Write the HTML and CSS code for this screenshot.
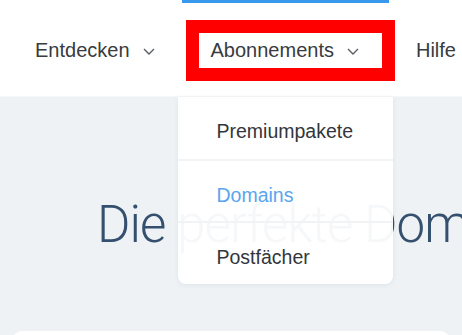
FILE: index.html
```html
<!DOCTYPE html>
<html>
<head>
    <title>Domains</title>
    <link rel="stylesheet" href="styles.css">
</head>
<body>
<header class="header">
    <nav class="nav">
        <a class="nav-item" href="#">Entdecken
            <svg class="chevron" viewBox="0 0 12 7"><path d="M1 1l5 5 5-5"/></svg>
        </a>
        <div class="nav-item nav-item-active">
            <a class="nav-link" href="#">Abonnements
                <svg class="chevron" viewBox="0 0 12 7"><path d="M1 1l5 5 5-5"/></svg>
            </a>
            <ul class="dropdown">
                <li><a href="#">Premiumpakete</a></li>
                <li><a class="current" href="#">Domains</a></li>
                <li><a href="#">Postfächer</a></li>
            </ul>
        </div>
        <a class="nav-item" href="#">Hilfe</a>
    </nav>
</header>
<main class="main">
    <h1 class="title">Die perfekte Domain für Ihre Website</h1>
    <div class="card"></div>
</main>
</body>
</html>
```

FILE: styles.css
```css
* {
	box-sizing: border-box;
}

html,
body {
	height: 100%;
}

body {
	margin: 0;
	overflow: hidden;
	background-color: #eef2f5;
	font-family: "Liberation Sans", Arial, sans-serif;
}

a {
	color: inherit;
	text-decoration: none;
}

.header {
	position: relative;
	z-index: 2;
	height: 97px;
	background-color: #fff;
	border-bottom: 1px solid #f5f7f9;
}

.nav {
	display: flex;
	align-items: center;
	gap: 57px;
	height: 100%;
	padding-top: 4px;
	padding-left: 35px;
	white-space: nowrap;
	color: #383b40;
	font-size: 20px;
}

.nav-item,
.nav-link {
	display: flex;
	align-items: center;
	gap: 13px;
}

.nav-item:first-child {
	margin-right: -1px;
}

.chevron {
	width: 12px;
	height: 7px;
	margin-top: 2px;
	fill: none;
	stroke: #5a5e63;
	stroke-width: 1.4;
}

.nav-item-active {
	position: relative;
}

/* selected marker on top of the header */
.nav-item-active::before {
	content: "";
	position: absolute;
	top: -33px;
	left: -29px;
	width: 207px;
	height: 3px;
	background-color: #3899ec;
}

/* highlight box */
.nav-link {
	outline: 13px solid #ff0000;
	padding: 0 23px 0 12px;
	margin: 0 -23px 0 -12px;
	height: 35px;
}

.dropdown {
	position: absolute;
	top: 64px;
	left: -33px;
	width: 215px;
	list-style: none;
	margin: 0;
	padding: 0;
	background-color: rgba(255, 255, 255, 0.955);
	border-radius: 0 0 8px 8px;
	box-shadow: 0 1px 5px rgba(40, 60, 90, 0.08);
	font-size: 19.5px;
	color: #33363a;
}

.dropdown li {
	height: 62px;
	padding: 24px 39px 0;
	line-height: 20px;
	border-top: 2px solid #f2f3f5;
}

.dropdown li:first-child {
	border-top: none;
}

.dropdown li:last-child {
	height: 63px;
}

.dropdown .current {
	color: #5aa5ee;
}

.main {
	position: relative;
	z-index: 1;
	padding-top: 98px;
}

.title {
	margin: 0;
	padding-left: 97px;
	white-space: nowrap;
	font-family: Roboto, "Liberation Sans", sans-serif;
	font-weight: 300;
	font-size: 51px;
	letter-spacing: -0.9px;
	line-height: 60px;
	color: #34506e;
}

.card {
	margin: 76px 12px 0;
	height: 200px;
	background-color: #fff;
	border-radius: 10px;
}
```
